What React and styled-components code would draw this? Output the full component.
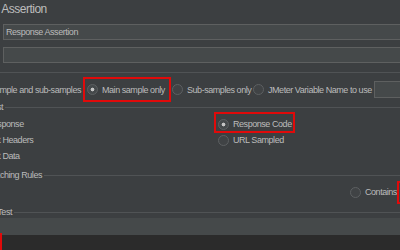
import React from "react";
import styled, { createGlobalStyle } from "styled-components";

const SHIFT = 80;

const GlobalStyle = createGlobalStyle`
  html, body {
    margin: 0;
    padding: 0;
    background: #3c3f41;
    overflow: hidden;
  }
  body {
    font-family: "Liberation Sans", Arial, sans-serif;
    color: #bbbbbb;
  }
`;

const Screen = styled.div`
  width: 400px;
  height: 250px;
  overflow: hidden;
  background: #3c3f41;
`;

const Panel = styled.div`
  margin-left: -${SHIFT}px;
  width: ${400 + SHIFT + 120}px;
  display: flex;
  flex-direction: column;
  font-size: 9px;
  letter-spacing: -0.45px;
`;

const Title = styled.div`
  font-size: 12px;
  letter-spacing: -0.5px;
  line-height: 16px;
  height: 16px;
  padding: 1px 0 0 ${SHIFT - 51}px;
  margin-bottom: 7px;
  white-space: nowrap;
  color: #bdbdbd;
`;

const FieldRow = styled.div`
  display: grid;
  grid-template-columns: ${SHIFT + 3}px 1fr;
  align-items: center;
  margin-top: ${(p) => p.$gap || 0}px;
`;

const Label = styled.span`
  padding-left: 30px;
`;

const Field = styled.div`
  box-sizing: border-box;
  height: ${(p) => p.$h || 16}px;
  border: 1px solid #5e6060;
  background: #45494a;
  padding: 1px 0 0 2px;
  line-height: ${(p) => (p.$h || 16) - 3}px;
  white-space: nowrap;
  align-self: center;
`;

const Legend = styled.div`
  display: grid;
  grid-template-columns: ${(p) => SHIFT + p.$labelEnd}px 1fr;
  align-items: center;
  column-gap: 2px;
  height: 10px;
  margin-top: ${(p) => p.$gap || 0}px;
  white-space: nowrap;

  span {
    justify-self: end;
  }

  &::after {
    content: "";
    height: 1px;
    background: #505355;
  }
`;

const ApplyRow = styled.div`
  display: grid;
  grid-template-columns: ${SHIFT + 87}px 85px 81px 121px 1fr;
  align-items: stretch;
  height: 25px;
`;

const Radio = styled.label`
  position: relative;
  display: inline-flex;
  align-items: center;
  gap: 4px;
  white-space: nowrap;
  justify-self: ${(p) => (p.$end ? "end" : "start")};
  padding-right: ${(p) => (p.$end ? 6 : 0)}px;
  height: 100%;

  ${(p) =>
    p.$mark &&
    `
    &::after {
      content: "";
      position: absolute;
      left: ${p.$mark[0]}px;
      right: ${p.$mark[1]}px;
      top: ${p.$mark[2]}px;
      bottom: ${p.$mark[3]}px;
      border: 2px solid #e00a0a;
      pointer-events: none;
    }
  `}
`;

const Dot = styled.span`
  box-sizing: border-box;
  width: 11px;
  height: 11px;
  flex: none;
  border-radius: 50%;
  border: 1px solid #5d6062;
  background: ${(p) =>
    p.$on
      ? "radial-gradient(circle, #c4c4c4 0 1.6px, #45494b 2.2px)"
      : "#404345"};
`;

const FieldGrid = styled.div`
  display: grid;
  grid-template-columns: ${SHIFT + 218}px 1fr;
  grid-auto-rows: 16px;
  margin-top: 4px;

  & > *:nth-child(odd) {
    padding-left: ${SHIFT - 45}px;
  }
`;

const PatternRow = styled.div`
  display: flex;
  gap: 5px;
  height: 22px;
  margin-top: 1px;
  padding-left: ${SHIFT + 350}px;
`;

const TableHead = styled.div`
  height: 17px;
  margin-top: 1px;
  background: #45494a;
`;

const TableBody = styled.div`
  display: grid;
  grid-template-columns: ${SHIFT + 2}px 1fr;
  height: 40px;
  background: #2b2b2b;
`;

const Marker = styled.div`
  margin-top: -2px;
  margin-left: 20px;
  height: 30px;
  border: 2px solid #e00a0a;
`;

const Option = ({ on, mark, end, children }) => (
  <Radio $mark={mark} $end={end}>
    <Dot $on={on} />
    {children}
  </Radio>
);

export default function App() {
  return (
    <Screen>
      <GlobalStyle />
      <Panel>
        <Title>Response Assertion</Title>
        <FieldRow>
          <Label>Name:</Label>
          <Field>Response Assertion</Field>
        </FieldRow>
        <FieldRow $gap={7}>
          <Label>Comments:</Label>
          <Field />
        </FieldRow>

        <Legend $labelEnd={-6} $gap={4}>
          <span>Apply to:</span>
        </Legend>
        <ApplyRow>
          <Option end>Main sample and sub-samples</Option>
          <Option on mark={[-4, -6, 0, 0]}>
            Main sample only
          </Option>
          <Option>Sub-samples only</Option>
          <Option>JMeter Variable Name to use</Option>
          <Field $h={17} />
        </ApplyRow>

        <Legend $labelEnd={3}>
          <span>Field to Test</span>
        </Legend>
        <FieldGrid>
          <Option>Text Response</Option>
          <Option on mark={[-4, -3, -4, -1]}>
            Response Code
          </Option>
          <Option>Request Headers</Option>
          <Option>URL Sampled</Option>
          <Option>Request Data</Option>
        </FieldGrid>

        <Legend $labelEnd={42} $gap={6}>
          <span>Pattern Matching Rules</span>
        </Legend>
        <PatternRow>
          <Option>Contains</Option>
          <Option mark={[-5, -4, 0, -1]}>Matches</Option>
        </PatternRow>

        <Legend $labelEnd={12} $gap={4}>
          <span>Patterns to Test</span>
        </Legend>
        <TableHead />
        <TableBody>
          <Marker />
        </TableBody>
      </Panel>
    </Screen>
  );
}
